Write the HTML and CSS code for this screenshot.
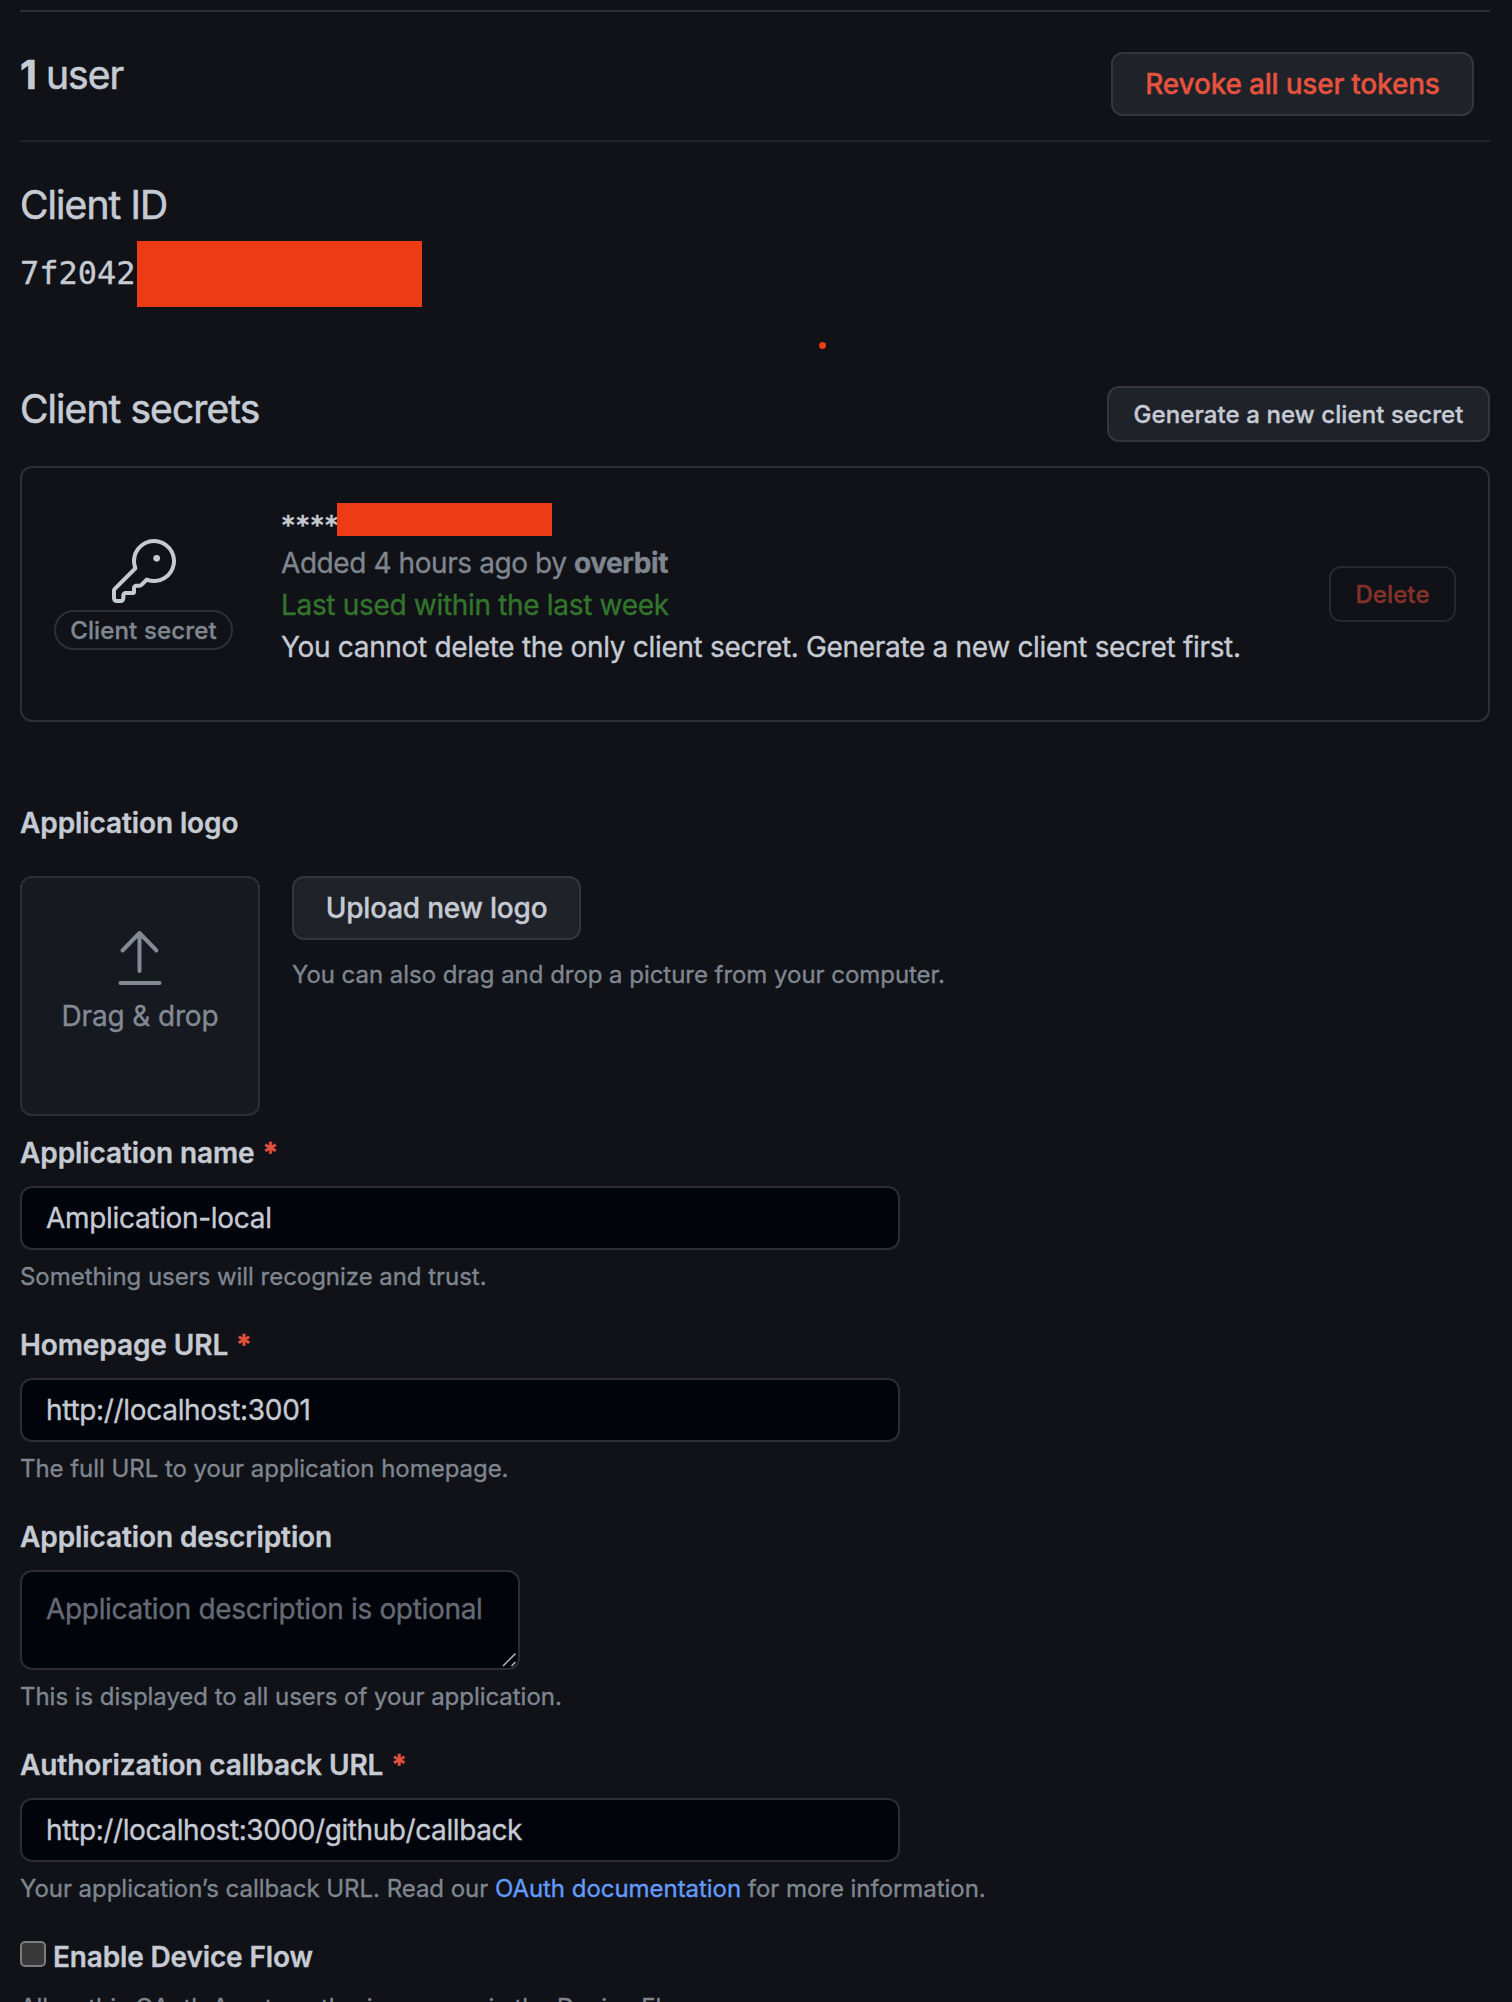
FILE: index.html
```
<!DOCTYPE html>
<html lang="en">
<head>
<meta charset="utf-8">
<title>OAuth application settings</title>
<link rel="stylesheet" href="styles.css">
</head>
<body>
<main class="page">
  <section class="users">
    <h2 class="heading"><strong>1</strong> user</h2>
    <button class="btn btn-danger">Revoke all user tokens</button>
  </section>

  <section class="client-id">
    <h2 class="heading">Client ID</h2>
    <div class="id-row"><code class="id-code">7f2042</code><span class="redact redact-id"></span></div>
    <span class="mark"></span>
  </section>

  <section class="secrets-head">
    <h2 class="heading heading-secrets">Client secrets</h2>
    <button class="btn btn-sm">Generate a new client secret</button>
  </section>

  <section class="secret">
    <div class="secret-kind">
      <svg class="key" viewBox="0 0 24 24" fill="currentColor"><path d="M16.75 8.5a1.25 1.25 0 1 0 0-2.5 1.25 1.25 0 0 0 0 2.5Z"/><path d="M15.75 0a8.25 8.25 0 1 1-2.541 16.101l-1.636 1.636a1.744 1.744 0 0 1-1.237.513H9.25a.25.25 0 0 0-.25.25v1.448a.876.876 0 0 1-.256.619l-.214.213a.75.75 0 0 1-.545.22H5.25a.25.25 0 0 0-.25.25v1A1.75 1.75 0 0 1 3.25 24h-1.5A1.75 1.75 0 0 1 0 22.25v-2.836c0-.464.185-.908.513-1.236l7.386-7.388A8.249 8.249 0 0 1 15.75 0ZM9 8.25a6.733 6.733 0 0 0 .463 2.462.75.75 0 0 1-.168.804l-7.722 7.721a.25.25 0 0 0-.073.177v2.836c0 .138.112.25.25.25h1.5a.25.25 0 0 0 .25-.25v-1c0-.966.784-1.75 1.75-1.75H7.5v-1c0-.966.784-1.75 1.75-1.75h1.086a.25.25 0 0 0 .177-.073l1.971-1.972a.75.75 0 0 1 .804-.168A6.75 6.75 0 1 0 9 8.25Z"/></svg>
      <span class="pill">Client secret</span>
    </div>
    <div class="secret-info">
      <div class="stars-row"><code class="stars">****</code><span class="redact redact-secret"></span></div>
      <div class="muted">Added 4 hours ago by <strong>overbit</strong></div>
      <div class="green">Last used within the last week</div>
      <div>You cannot delete the only client secret. Generate a new client secret first.</div>
    </div>
    <button class="btn btn-sm btn-off">Delete</button>
  </section>

  <section class="logo">
    <h3 class="label">Application logo</h3>
    <div class="logo-row">
      <div class="drop">
        <svg class="arrow" viewBox="0 0 44 56" fill="none" stroke="currentColor" stroke-width="4" stroke-linecap="round" stroke-linejoin="round"><path d="M21.500 41V3M4.500 20.500 21.500 3l17 17.500M2.500 53h39"/></svg>
        <span class="drop-text">Drag &amp; drop</span>
      </div>
      <div class="logo-side">
        <button class="btn btn-upload">Upload new logo</button>
        <p class="note">You can also drag and drop a picture from your computer.</p>
      </div>
    </div>
  </section>

  <form class="form">
    <div class="field">
      <label class="label">Application name <span class="req">*</span></label>
      <div class="input"><span>Amplication-local</span></div>
      <p class="note">Something users will recognize and trust.</p>
    </div>
    <div class="field">
      <label class="label">Homepage URL <span class="req">*</span></label>
      <div class="input"><span>http://localhost:3001</span></div>
      <p class="note">The full URL to your application homepage.</p>
    </div>
    <div class="field field-area">
      <label class="label">Application description</label>
      <div class="input area"><span class="placeholder">Application description is optional</span>
        <svg class="grip" viewBox="0 0 16 16" fill="none" stroke="#b9babd" stroke-width="1.500"><path d="M1 14 13.500 1.500M9.500 14 13.500 10"/></svg>
      </div>
      <p class="note">This is displayed to all users of your application.</p>
    </div>
    <div class="field">
      <label class="label">Authorization callback URL <span class="req">*</span></label>
      <div class="input"><span class="callback">http://localhost:3000/github/callback</span></div>
      <p class="note">Your application’s callback URL. Read our <a class="link">OAuth documentation</a> for more information.</p>
    </div>
    <div class="check-field">
      <label class="check"><span class="box"></span><span class="label">Enable Device Flow</span></label>
      <p class="note">Allow this OAuth App to authorize users via the Device Flow.</p>
    </div>
  </form>
</main>
</body>
</html>
```
FILE: styles.css
```
* { box-sizing: border-box; }
html { overflow: hidden; }
body {
  margin: 0;
  height: 2002px;
  overflow: hidden;
  background: #101217;
  color: #c5cad3;
  font: 400 28px/42px Inter, "Liberation Sans", sans-serif;
  letter-spacing: -0.32px;
  -webkit-text-stroke: 0.35px currentColor;
}
h2, h3, p { margin: 0; font-weight: 400; }
.page { width: 1490px; padding: 10px 0 0 20px; white-space: nowrap; }
.users {
  height: 132px;
  display: flex;
  justify-content: space-between;
  padding: 40px 16px 0 0;
  border-top: 2px solid #2d2f35;
  border-bottom: 2px solid #212329;
}
.heading { font-size: 39px; line-height: 46px; letter-spacing: -0.92px; -webkit-text-stroke-width: 0.6px; }
.btn {
  font: 500 28px/40px Inter, "Liberation Sans", sans-serif;
  letter-spacing: -0.2px;
  height: 64px;
  padding: 0;
  border: 2px solid #34363c;
  border-radius: 12px;
  background: #1f2229;
  color: #c5cad3;
}
.btn-danger { width: 363px; color: #e5533f; }
.btn-sm { font-size: 24px; line-height: 32px; height: 56px; width: 383px; padding-top: 1px; letter-spacing: 0.1px; }
.client-id { position: relative; height: 244px; padding-top: 40px; }
.id-row { display: flex; margin-top: 13px; height: 66px; }
.id-code { font: 32px/65px "DejaVu Sans Mono", monospace; width: 117px; letter-spacing: 0; }
.redact { background: #ec3b15; }
.redact-id { width: 285px; height: 66px; }
.mark { position: absolute; left: 799px; top: 200px; width: 7px; height: 7px; border-radius: 50%; background: #ec3b15; }
.secrets-head { height: 80px; display: flex; justify-content: space-between; }
.secret {
  height: 256px;
  display: flex;
  align-items: center;
  border: 2px solid #2d2f35;
  border-radius: 12px;
  padding: 0 32px;
}
.secret-kind { width: 227px; display: flex; flex-direction: column; align-items: flex-start; }
.key { width: 64px; height: 64px; margin-left: 58px; }
.pill {
  width: 179px; height: 40px; margin-top: 7px;
  border: 2px solid #2d2f35; border-radius: 20px;
  font-weight: 500; font-size: 24px; line-height: 38px; letter-spacing: 0.15px;
  text-align: center; color: #7f8690;
}
.secret-info { flex: 1; padding-bottom: 18px; }
.stars-row { display: flex; height: 39px; }
.stars { font: bold 24px/45px "DejaVu Sans Mono", monospace; width: 56px; letter-spacing: 0; }
.redact-secret { width: 215px; height: 33px; }
.muted { color: #7f8690; }
.green { color: #33752d; }
.btn-off { width: 127px; background: transparent; border-color: #26282e; color: #843229; }
.muted { letter-spacing: -0.42px; }
.logo { padding-top: 80px; }
.label { display: block; font-size: 28px; line-height: 42px; font-weight: 600; letter-spacing: -0.1px; }
.logo-row { display: flex; gap: 32px; margin-top: 32px; }
.drop {
  width: 240px; height: 240px;
  border: 2px solid #2d2f35; border-radius: 12px;
  background: #161920; color: #848a94;
  display: flex; flex-direction: column; align-items: center;
  padding-top: 52px;
}
.arrow { width: 44px; height: 56px; }
.drop-text { margin-top: 9px; letter-spacing: -0.15px; }
.btn-upload { width: 289px; }
.logo-side .note { margin-top: 17px; }
.note { font-size: 24px; line-height: 36px; color: #7f8690; letter-spacing: -0.04px; }
.form { padding-top: 16px; }
.field { height: 192px; }
.field-area { height: 228px; }
.req { color: #e5533f; font-weight: 700; margin-left: 1px; }
.input {
  position: relative;
  width: 880px; height: 64px; margin: 12px 0 9px;
  border: 2px solid #2b2d33; border-radius: 12px;
  background: #02040b; line-height: 60px; padding-left: 24px;
}
.callback { letter-spacing: -0.41px; }
.area { width: 500px; height: 100px; line-height: 75px; }
.placeholder { color: #656b75; }
.grip { position: absolute; right: 0; bottom: 0; width: 16px; height: 16px; }
.link { color: #639bff; }
.check { display: flex; gap: 7px; }
.box { width: 26px; height: 26px; margin-top: 5px; border: 2px solid #7b7b7b; border-radius: 5px; background: #383838; }
.check .label { letter-spacing: -0.15px; }
.check-field .note { margin-top: 12px; }
```
